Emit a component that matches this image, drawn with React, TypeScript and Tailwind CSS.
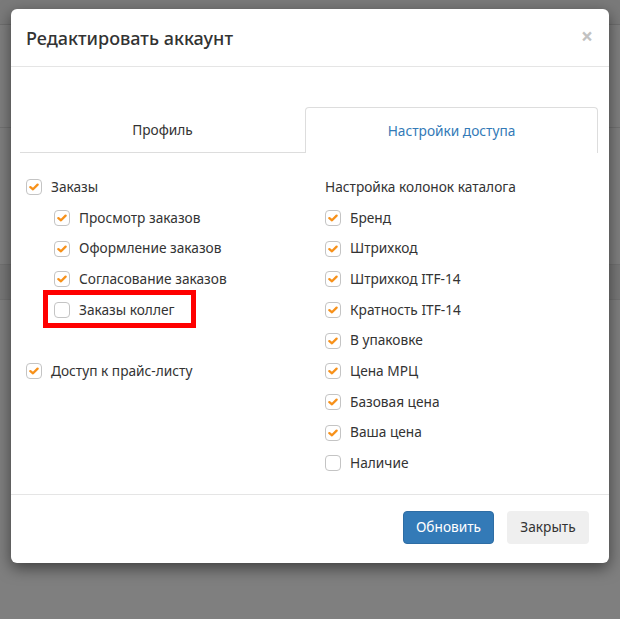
import React from "react";

const font = { fontFamily: '"Noto Sans", "Open Sans", sans-serif' };

function Box({ checked }: { checked: boolean }) {
  return (
    <span className="w-[16px] h-[16px] shrink-0 rounded-[4px] border border-[#c4c4c4] bg-white flex items-center justify-center">
      {checked && (
        <svg width="10" height="8" viewBox="0 0 10 8">
          <path d="M1.4 4.1 L4 6.3 L8.6 1.6" fill="none" stroke="#f7911a" strokeWidth="2.3" strokeLinecap="round" strokeLinejoin="round" />
        </svg>
      )}
    </span>
  );
}

function Row({ label, checked, indent = false }: { label: string; checked: boolean; indent?: boolean }) {
  return (
    <div className={`h-[30.67px] flex items-center gap-[9px] ${indent ? "pl-[28px]" : ""}`}>
      <Box checked={checked} />
      <span className="text-[13.7px] text-[#333]">{label}</span>
    </div>
  );
}

export default function App() {
  const right = [
    ["Бренд", true],
    ["Штрихкод", true],
    ["Штрихкод ITF-14", true],
    ["Кратность ITF-14", true],
    ["В упаковке", true],
    ["Цена МРЦ", true],
    ["Базовая цена", true],
    ["Ваша цена", true],
    ["Наличие", false],
  ] as const;

  return (
    <div className="relative w-full h-[619px] bg-[#7f7f7f] overflow-hidden" style={font}>
      <div className="flex flex-col">
        <div className="h-[25px] border-b border-[#6e6e6e] bg-[#7a7a7a]" />
        <div className="h-[103px] border-b border-[#727272]" />
        <div className="h-[136px]" />
        <div className="h-[36px] bg-[#787878] border-y border-[#727272]" />
      </div>

      <div className="absolute left-[11px] top-[9px] w-[598px] h-[554px] bg-white rounded-[6px] shadow-[0_5px_15px_rgba(0,0,0,0.5)] flex flex-col">
        <div className="h-[58px] px-[15px] flex items-center justify-between border-b border-[#e5e5e5]">
          <h4 className="text-[18px] font-medium text-[#333] leading-none">Редактировать аккаунт</h4>
          <span className="text-[21px] font-bold text-[#c2c2c2] leading-none mr-[1px] -mt-[2px]">×</span>
        </div>

        <div className="flex-1 pt-[40px]">
          <div className="flex h-[46px] ml-[9px] mr-[11px]">
            <div className="w-[285px] border-b border-[#ddd] flex items-center justify-center pt-[2px] text-[13.7px] text-[#333]">Профиль</div>
            <div className="flex-1 border border-b-0 border-[#ddd] rounded-t-[4px] flex items-center justify-center pt-[2px] text-[13.7px] text-[#337ab7]">Настройки доступа</div>
          </div>

          <div className="flex pt-[19px] px-[15px]">
            <div className="w-[299px] flex flex-col">
              <Row label="Заказы" checked />
              <Row label="Просмотр заказов" checked indent />
              <Row label="Оформление заказов" checked indent />
              <Row label="Согласование заказов" checked indent />
              <div className="relative">
                <Row label="Заказы коллег" checked={false} indent />
                <span className="absolute left-[17px] top-[-5px] w-[153px] h-[38px] border-[5px] border-[#ff0000]" />
              </div>
              <div className="h-[30.67px]" />
              <Row label="Доступ к прайс-листу" checked />
            </div>
            <div className="flex-1 flex flex-col">
              <div className="h-[30.67px] flex items-center text-[13.7px] text-[#333]">Настройка колонок каталога</div>
              {right.map(([l, c]) => (
                <Row key={l} label={l} checked={c} />
              ))}
            </div>
          </div>
        </div>

        <div className="h-[69px] border-t border-[#e5e5e5] flex items-start justify-end gap-[13px] pt-[16px] pr-[20px]">
          <button className="h-[33px] w-[91px] rounded-[4px] bg-[#337ab7] border border-[#2e6da4] text-white text-[13.7px]">Обновить</button>
          <button className="h-[33px] w-[82px] rounded-[4px] bg-[#efefef] text-[#333] text-[13.7px]">Закрыть</button>
        </div>
      </div>
    </div>
  );
}
